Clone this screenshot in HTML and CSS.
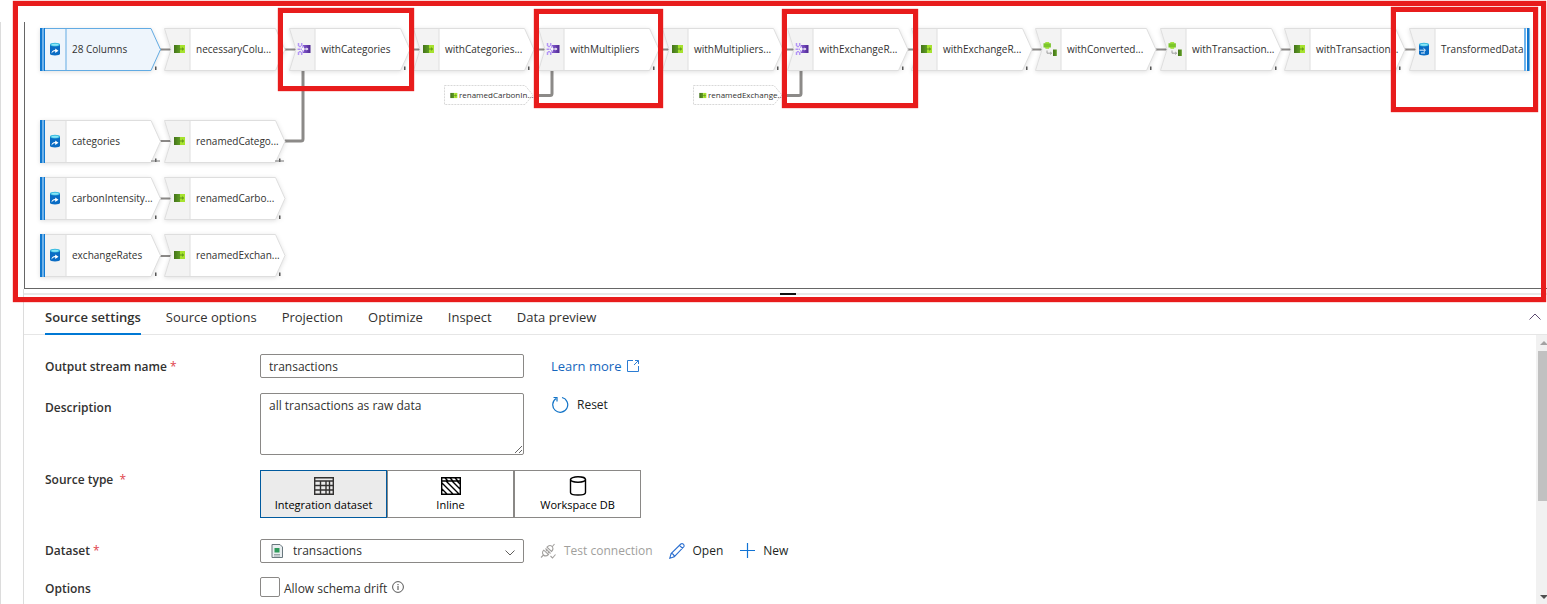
FILE: index.html
```html
<!DOCTYPE html>
<html lang="en">
<head>
<meta charset="utf-8">
<title>Data flow</title>
<link rel="stylesheet" href="styles.css">
</head>
<body>
<svg class="defs" aria-hidden="true">
  <defs>
    <linearGradient id="g-dark" x1="0" x2="1"><stop offset="0" stop-color="#44731a"/><stop offset="1" stop-color="#5f9e22"/></linearGradient>
    <linearGradient id="g-purple" x1="0" x2="1"><stop offset="0" stop-color="#8a5fd6"/><stop offset="1" stop-color="#4d2791"/></linearGradient>
    <symbol id="shape-source" viewBox="0 0 122 44">
      <path class="face" d="M.5.5H111L120.500 21.500L111 42.500H.5z"/>
      <path class="side" d="M1 1H26V42H1z"/>
      <path class="edge" d="M.5.5H111L120.500 21.500L111 42.500H.5zM26 1V42"/>
      <path fill="#0f78d0" d="M0 0H2.500V43H0zM4 0H5V43H4z"/>
      <path fill="#6cb2ec" d="M2.500 0H4V43H2.500z"/>
      <path fill="#555" d="M115 38.500h1.500v3.500h-1.500z"/>
    </symbol>
    <symbol id="shape-step" viewBox="0 0 122 44">
      <path class="face" d="M.5.5H111.500L121 21.500L111.500 42.500H.5L7 21.500z"/>
      <path class="side" d="M.5.5H26V42.500H.5L7 21.500z"/>
      <path class="edge" d="M.5.5H111.500L121 21.500L111.500 42.500H.5L7 21.500zM26 1V42"/>
      <path fill="#555" d="M115 38.500h1.500v3.500h-1.500z"/>
    </symbol>
    <symbol id="shape-sink" viewBox="0 0 122 44">
      <path class="face" d="M.5.5H120V42.500H.5L7 21.500z"/>
      <path class="side" d="M.5.5H26V42.500H.5L7 21.500z"/>
      <path class="edge" d="M.5.5H120V42.500H.5L7 21.500zM26 1V42"/>
      <path fill="#6cb2ec" d="M115 0h2v43h-2z"/>
      <path fill="#0f78d0" d="M118 0h2.500v43h-2.500z"/>
    </symbol>
    <symbol id="i-source" viewBox="0 0 14 14">
      <path fill="#0a6cc4" d="M2 2.500V12c0 .8 2.200 1.400 5 1.400s5-.6 5-1.400V2.500z"/>
      <ellipse cx="7" cy="2.600" rx="5" ry="1.900" fill="#35b9e0"/>
      <ellipse cx="7" cy="2.800" rx="3.600" ry="1" fill="#8be6f5"/>
      <path fill="#fff" d="M3.500 11.500c0-2.400 1.400-3.600 3.700-3.600V6.500l3.300 2.200-3.300 2.200V9.300c-1.600 0-2.500.6-3.700 2.200z"/>
    </symbol>
    <symbol id="i-sink" viewBox="0 0 14 14">
      <path fill="#0a6cc4" d="M2 2.500V12c0 .8 2.200 1.400 5 1.400s5-.6 5-1.400V2.500z"/>
      <ellipse cx="7" cy="2.600" rx="5" ry="1.900" fill="#35b9e0"/>
      <ellipse cx="7" cy="2.800" rx="3.600" ry="1" fill="#8be6f5"/>
      <path fill="none" stroke="#e6f4ff" d="M2.500 8.200h5.500M6.500 6.300l2 1.900-2 1.900M4 11h4"/>
    </symbol>
    <symbol id="i-select" viewBox="0 0 14 14">
      <path fill="url(#g-dark)" d="M2 3h6v8H2z"/>
      <path fill="#a6e22e" d="M8 3h5v8H8z"/>
      <path fill="none" stroke="#4b7d18" stroke-width=".8" d="M7.500 7h4M10 5.600L11.500 7 10 8.400"/>
    </symbol>
    <symbol id="i-join" viewBox="0 0 14 14">
      <path fill="none" stroke="#b394f5" stroke-width="1.500" d="M1.500 1v3.500H4M4.700 1v3l1.500 1.500M.5 7.200h4.500M1.500 13V9.700H4M4.700 13v-3l1.500-1.500" stroke-dasharray="3 .6"/>
      <path fill="url(#g-purple)" d="M5.500 3h8v8h-8l1.500-2.300V5.300z"/>
      <path fill="#fff" d="M5 6.400h4.500v-1L11.500 7l-2 1.600v-1H5z"/>
    </symbol>
    <symbol id="i-derive" viewBox="0 0 14 14">
      <path fill="#7cc62c" d="M2.500.2h3.600v1h1.800v4.200H6.100v1.100H2.500V5.400H.5V1.200h2z"/>
      <path fill="#a8e838" d="M2.500.2h3.600v1.200H2.500zM2.500 5.300h3.600v1.200H2.500z"/>
      <path fill="url(#g-dark)" d="M10 7.500h3.800V14H10z"/>
      <path fill="none" stroke="#8b8b8b" stroke-width=".8" d="M4 8.500v2.700h4.500M7.200 10l1.400 1.200-1.400 1.300"/>
    </symbol>
  </defs>
</svg>

<div class="workspace">
  <section class="canvas" aria-label="Data flow graph">
    <svg class="links" width="1522" height="266" viewBox="25 22 1522 266" aria-hidden="true">
      <path d="M160 49.500H172M285 49.500H296M409 49.500H420M533 49.500H545M658 49.500H669M782 49.500H794M907 49.500H918M1031 49.500H1042M1155 49.500H1167M1280 49.500H1291M1404 49.500H1416M160 141H172M160 198.500H172M160 256H172"/>
      <path d="M285 141H301Q303 141 303 139V71M534 95.500H550Q552 95.500 552 93.500V71M783 95.500H799Q801 95.500 801 93.500V71"/>
    </svg>

    <div class="node r0 c0 selected"><svg class="shape"><use href="#shape-source"/></svg><svg class="glyph"><use href="#i-source"/></svg><span>28 Columns</span></div>
    <div class="node r0 c1"><svg class="shape"><use href="#shape-step"/></svg><svg class="glyph"><use href="#i-select"/></svg><span>necessaryColu...</span></div>
    <div class="node r0 c2"><svg class="shape"><use href="#shape-step"/></svg><svg class="glyph"><use href="#i-join"/></svg><span>withCategories</span></div>
    <div class="node r0 c3"><svg class="shape"><use href="#shape-step"/></svg><svg class="glyph"><use href="#i-select"/></svg><span>withCategories...</span></div>
    <div class="node r0 c4"><svg class="shape"><use href="#shape-step"/></svg><svg class="glyph"><use href="#i-join"/></svg><span>withMultipliers</span></div>
    <div class="node r0 c5"><svg class="shape"><use href="#shape-step"/></svg><svg class="glyph"><use href="#i-select"/></svg><span>withMultipliers...</span></div>
    <div class="node r0 c6"><svg class="shape"><use href="#shape-step"/></svg><svg class="glyph"><use href="#i-join"/></svg><span>withExchangeR...</span></div>
    <div class="node r0 c7"><svg class="shape"><use href="#shape-step"/></svg><svg class="glyph"><use href="#i-select"/></svg><span>withExchangeR...</span></div>
    <div class="node r0 c8"><svg class="shape"><use href="#shape-step"/></svg><svg class="glyph"><use href="#i-derive"/></svg><span>withConverted...</span></div>
    <div class="node r0 c9"><svg class="shape"><use href="#shape-step"/></svg><svg class="glyph"><use href="#i-derive"/></svg><span>withTransaction...</span></div>
    <div class="node r0 c10"><svg class="shape"><use href="#shape-step"/></svg><svg class="glyph"><use href="#i-select"/></svg><span>withTransaction...</span></div>
    <div class="node r0 c11"><svg class="shape"><use href="#shape-sink"/></svg><svg class="glyph"><use href="#i-sink"/></svg><span>TransformedData</span></div>

    <div class="node r1 c0"><svg class="shape"><use href="#shape-source"/><path fill="#777" d="M111 40.500h9v1h-9z"/></svg><svg class="glyph"><use href="#i-source"/></svg><span>categories</span></div>
    <div class="node r1 c1"><svg class="shape"><use href="#shape-step"/><path fill="#777" d="M111 40.500h9v1h-9z"/></svg><svg class="glyph"><use href="#i-select"/></svg><span>renamedCatego...</span></div>
    <div class="node r2 c0"><svg class="shape"><use href="#shape-source"/></svg><svg class="glyph"><use href="#i-source"/></svg><span>carbonIntensity...</span></div>
    <div class="node r2 c1"><svg class="shape"><use href="#shape-step"/></svg><svg class="glyph"><use href="#i-select"/></svg><span>renamedCarbo...</span></div>
    <div class="node r3 c0"><svg class="shape"><use href="#shape-source"/></svg><svg class="glyph"><use href="#i-source"/></svg><span>exchangeRates</span></div>
    <div class="node r3 c1"><svg class="shape"><use href="#shape-step"/></svg><svg class="glyph"><use href="#i-select"/></svg><span>renamedExchan...</span></div>

    <div class="ref ref-carbon"><svg class="ref-shape" viewBox="0 0 90 20"><path d="M.5.5H81L89 10L81 19.500H.5z"/></svg><svg class="ref-glyph"><use href="#i-select"/></svg><span>renamedCarbonIn...</span></div>
    <div class="ref ref-exchange"><svg class="ref-shape" viewBox="0 0 90 20"><path d="M.5.5H81L89 10L81 19.500H.5z"/></svg><svg class="ref-glyph"><use href="#i-select"/></svg><span>renamedExchange...</span></div>
  </section>

  <div class="splitter"><span class="grip"></span></div>

  <section class="panel">
    <header class="tabbar">
      <nav class="tabs" role="tablist">
        <button class="tab active" role="tab" aria-selected="true">Source settings</button>
        <button class="tab" role="tab">Source options</button>
        <button class="tab" role="tab">Projection</button>
        <button class="tab" role="tab">Optimize</button>
        <button class="tab" role="tab">Inspect</button>
        <button class="tab" role="tab">Data preview</button>
      </nav>
      <button class="collapse" aria-label="Collapse panel"><svg width="12" height="8" viewBox="0 0 12 8"><path d="M.5 6.500L6 1l5.500 5.500" fill="none" stroke="#5c4a70"/></svg></button>
    </header>
    <div class="content">
      <form class="form">
        <div class="row">
          <label class="label" for="stream">Output stream name <b>*</b></label>
          <input class="field" id="stream" type="text" value="transactions">
          <a class="learn" href="#">Learn more <svg width="14" height="14" viewBox="0 0 14 14"><path d="M7 1.500H1.500v11h11V7M9 1.500h3.500V5M12.500 1.500L8 6" fill="none" stroke="#2b7cd3"/></svg></a>
        </div>
        <div class="row row-top">
          <label class="label" for="desc">Description</label>
          <textarea class="field area" id="desc">all transactions as raw data</textarea>
          <button class="command reset" type="button"><svg width="18" height="18" viewBox="0 0 18 18"><path d="M11 1.500A7.500 7.500 0 1 1 5 2.600M2.500 1.500H6V5.500" fill="none" stroke="#1173c7" stroke-width="1.200"/></svg>Reset</button>
        </div>
        <div class="row row-type">
          <span class="label" id="type-label">Source type &nbsp;<b>*</b></span>
          <div class="types" role="group" aria-labelledby="type-label">
            <button class="type chosen" type="button" aria-pressed="true"><svg width="20" height="20" viewBox="0 0 20 20"><path d="M.7 1.700h18.600v16.600H.7zM1 5h18M1 9.500h18M1 14h18M6.500 5v13M12 5v13M15.500 5v13" fill="none" stroke="#323130" stroke-width="1.400"/></svg>Integration dataset</button>
            <button class="type" type="button"><svg width="20" height="20" viewBox="0 0 20 20"><path d="M.7 1.700h18.600v16.600H.7zM1 5h18M1 7l11 11M1 13l5 5M5 5l13 13M11 5l8 8M16 5l3 3M4 2l3 3M9 2l3 3M14 2l3 3" fill="none" stroke="#000" stroke-width="1.400"/></svg>Inline</button>
            <button class="type" type="button"><svg width="20" height="20" viewBox="0 0 20 20"><path d="M2.500 3.500v13c0 3.400 15 3.400 15 0v-13" fill="none" stroke="#000" stroke-width="1.400"/><ellipse cx="10" cy="3.500" rx="7.500" ry="2.700" fill="none" stroke="#000" stroke-width="1.400"/></svg>Workspace DB</button>
          </div>
        </div>
        <div class="row row-dataset">
          <label class="label" for="dataset">Dataset <b>*</b></label>
          <div class="picker">
            <select class="field" id="dataset"><option>transactions</option></select>
            <svg class="file" width="12" height="14" viewBox="0 0 12 14"><path d="M1 .5h8l2.500 2.500v10.500H1z" fill="#e9eef0" stroke="#68777d"/><path d="M3.500 4h5v4.500h-5z" fill="#2e9a5b"/><path d="M3 10.500h6M3 12h6" stroke="#9aa5aa"/></svg>
            <svg class="chevron" width="10" height="6" viewBox="0 0 10 6"><path d="M.5.500L5 5 9.500.500" fill="none" stroke="#605e5c"/></svg>
          </div>
          <div class="commands">
            <button class="command" type="button" disabled><svg width="16" height="16" viewBox="0 0 16 16"><g fill="none" stroke="#a3a19f" stroke-width="1.100"><path d="M1 14.500l2.500-2.500M12 4l2.500-3M5.500 5.500l5 5M3.800 7.200C1.800 9.200 2.500 11 3.500 12s3 1.500 5-.5zM7 4.200C9 2 10.800 2.200 12 3.500s1.500 3-.5 5zM6 8l1.500-1.500M8 10l1.500-1.500M10.500 13l2 2 3-3.500"/></g></svg>Test connection</button>
            <button class="command" type="button"><svg width="16" height="16" viewBox="0 0 16 16"><path d="M.8 15.200l1.300-4.700L11.800 1c1.800-1.200 4 .8 3 2.800L5.300 13.700zM10.500 2.300l3.200 3.200M2.100 10.500c2 .2 3 1.300 3.200 3.200" fill="none" stroke="#2b6fd0" stroke-width="1.100"/></svg>Open</button>
            <button class="command" type="button"><svg width="16" height="16" viewBox="0 0 16 16"><path d="M8.500 0v15M1 7.500h15" fill="none" stroke="#1173d4" stroke-width="1.200"/></svg>New</button>
          </div>
        </div>
        <div class="row row-options">
          <span class="label">Options</span>
          <input class="check" id="drift" type="checkbox">
          <label class="check-label" for="drift">Allow schema drift</label>
          <svg class="info" width="12" height="12" viewBox="0 0 12 12"><circle cx="6" cy="6" r="5.400" fill="none" stroke="#444" stroke-width=".9"/><path d="M6 5v4M6 3v1.200" stroke="#444"/></svg>
        </div>
      </form>
      <div class="scrollbar" aria-hidden="true"><span class="up"></span><span class="thumb"></span><span class="down"></span></div>
    </div>
  </section>
</div>

<div class="mark mark-flow"></div>
<div class="mark mark-categories"></div>
<div class="mark mark-multipliers"></div>
<div class="mark mark-exchange"></div>
<div class="mark mark-sink"></div>
</body>
</html>
```
FILE: styles.css
```css
* { box-sizing: border-box; }
html { height: 100%; }
body {
  margin: 0;
  height: 100%;
  padding-top: 22px;
  position: relative;
  overflow: hidden;
  background: #fff;
  color: #323130;
  font: 13px/20px "Segoe UI", "Open Sans", "Noto Sans", sans-serif;
}
button, input, select, textarea { font: inherit; color: inherit; }
button { background: none; border: 0; padding: 0; }
svg { display: block; flex: none; }
.defs { position: absolute; width: 0; height: 0; }

.workspace {
  height: 100%;
  display: flex;
  flex-direction: column;
  border-left: 1px solid #dcdcdc;
  padding-left: 22px;
}

/* Graph */
.canvas {
  position: relative;
  flex: none;
  height: 267px;
  margin-left: 1px;
  overflow: hidden;
  border-left: 1px solid #666;
  border-bottom: 1px solid #666;
}
.links { position: absolute; left: 0; top: 0; fill: none; stroke: #8c8a88; stroke-width: 2; }
.links path + path { stroke-width: 3; }
.node {
  position: absolute;
  width: 122px;
  height: 44px;
  padding: 0 0 2px 32px;
  display: flex;
  align-items: center;
  font-size: 10px;
  line-height: 16px;
  white-space: nowrap;
  color: #323130;
}
.node span { position: relative; }
.shape {
  position: absolute;
  left: 0;
  top: 0;
  width: 122px;
  height: 44px;
  filter: drop-shadow(0 1px 2px rgba(0, 0, 0, .12));
  --face: #fff;
  --side: #f3f3f3;
  --edge: #dedede;
}
.selected .shape { --face: #eef5fc; --side: #eef5fc; --edge: #62abe3; }
.face { fill: var(--face); }
.side { fill: var(--side); }
.edge { fill: none; stroke: var(--edge); }
.glyph { position: absolute; left: 8px; top: 14px; width: 14px; height: 14px; }
.r0 { top: 6px; }
.r1 { top: 98px; }
.r2 { top: 155px; }
.r3 { top: 212px; }
.c0 { left: 15px; }
.c1 { left: 139px; }
.c2 { left: 264px; }
.c3 { left: 388px; }
.c4 { left: 513px; }
.c5 { left: 637px; }
.c6 { left: 762px; }
.c7 { left: 886px; }
.c8 { left: 1010px; }
.c9 { left: 1135px; }
.c10 { left: 1259px; }
.c11 { left: 1384px; }

.ref {
  position: absolute;
  top: 63px;
  width: 90px;
  height: 20px;
  padding-left: 5px;
  display: flex;
  align-items: center;
  gap: 1px;
  font-size: 8px;
  line-height: 12px;
  white-space: nowrap;
}
.ref-shape { position: absolute; left: 0; top: 0; width: 90px; height: 20px; fill: none; stroke: #d8d8d8; stroke-dasharray: 2 1; }
.ref-glyph { width: 9px; height: 9px; }
.ref-carbon { left: 419px; }
.ref-exchange { left: 668px; }

.splitter {
  flex: none;
  height: 11px;
  padding: 4px 0 0 4px;
  border-left: 1px solid #dcdcdc;
  background: linear-gradient(#e8e8e8, #e8e8e8) 0 4px / 100% 2px no-repeat;
}
.grip { display: block; width: 16px; height: 2px; margin: 0 auto; background: #111; }

/* Settings panel */
.panel { flex: 1; min-height: 0; display: flex; flex-direction: column; border-left: 1px solid #dcdcdc; }
.tabbar {
  flex: none;
  height: 35px;
  padding: 0 6px 0 21px;
  display: flex;
  justify-content: space-between;
  align-items: stretch;
  border-bottom: 1px solid #e6e6e6;
}
.tabs { display: flex; gap: 25px; margin-bottom: -1px; }
.tab { padding-top: 1px; border-bottom: 2px solid transparent; }
.tab.active { font-weight: 600; border-color: #0078d4; }
.content { flex: 1; min-height: 0; display: flex; }
.form { flex: 1; padding: 19px 0 0 21px; overflow: hidden; font-size: 12px; }
.row { display: flex; align-items: center; margin-bottom: 15px; }
.row-top { align-items: flex-start; }
.label { width: 215px; flex: none; font-weight: 600; padding-top: 2px; }
.label b { font-weight: 400; color: #e0444c; }
.row-top .label { padding-top: 5px; }
.row-type { align-items: flex-start; margin-bottom: 21px; }
.row-type .label { padding-top: 0; }
.row-dataset { margin-bottom: 12px; }
.row-dataset .label { padding-top: 0; }
.row-options { margin-bottom: 0; }
.row-options .label { padding-top: 4px; }
.field {
  display: block;
  width: 264px;
  height: 24px;
  margin: 0;
  padding: 0 8px;
  border: 1px solid #8a8886;
  border-radius: 2px;
  background: #fff;
}
.area { height: 62px; padding-top: 2px; resize: both; }
.learn { display: flex; align-items: center; gap: 5px; margin-left: 27px; font-size: 13px; color: #1566bd; text-decoration: none; }
.command { display: flex; align-items: center; gap: 8px; color: #201f1e; }
.command:disabled { color: #a19f9d; }
.reset { margin: 2px 0 0 27px; }
.commands { display: flex; gap: 16px; margin-left: 16px; }
.types { display: flex; }
.type {
  width: 127px;
  height: 48px;
  padding-top: 2px;
  display: flex;
  flex-direction: column;
  align-items: center;
  justify-content: center;
  border: 1px solid #8a8886;
  font-size: 11px;
  line-height: 18px;
  color: #000;
}
.type.chosen { background: #ebebeb; border-color: #005a9e; }
.picker { position: relative; }
.picker .field { appearance: none; padding-left: 32px; }
.file { position: absolute; left: 11px; top: 5px; }
.chevron { position: absolute; right: 9px; top: 11px; }
.check {
  appearance: none;
  width: 20px;
  height: 20px;
  margin: 0 4px 0 0;
  border: 1px solid #8a8886;
  border-radius: 2px;
  background: #fff;
}
.check-label { padding-top: 4px; }
.info { margin-left: 5px; }

.scrollbar { flex: none; width: 11px; display: flex; flex-direction: column; background: #f1f1f1; padding: 6px 0 5px; overflow: hidden; }
.up, .down { margin-left: 4px; width: 0; border: 4px solid transparent; }
.up { border-top: 0; border-bottom: 4px solid #a3a3a3; margin-bottom: 6px; }
.down { border-bottom: 0; border-top: 4px solid #505050; margin-top: auto; }
.thumb { height: 150px; margin-left: 2px; background: #c1c1c1; }

/* Highlight frames */
.mark { position: absolute; border: 5px solid #e81c1c; box-shadow: 0 0 1px #e81c1c; pointer-events: none; }
.mark-flow { left: 13px; right: 1px; top: 1px; height: 301px; }
.mark-categories { left: 278px; top: 8px; width: 136px; height: 83px; }
.mark-multipliers { left: 534px; top: 9px; width: 129px; height: 99px; }
.mark-exchange { left: 782px; top: 9px; width: 136px; height: 99px; }
.mark-sink { left: 1391px; top: 7px; width: 147px; height: 105px; }
```
